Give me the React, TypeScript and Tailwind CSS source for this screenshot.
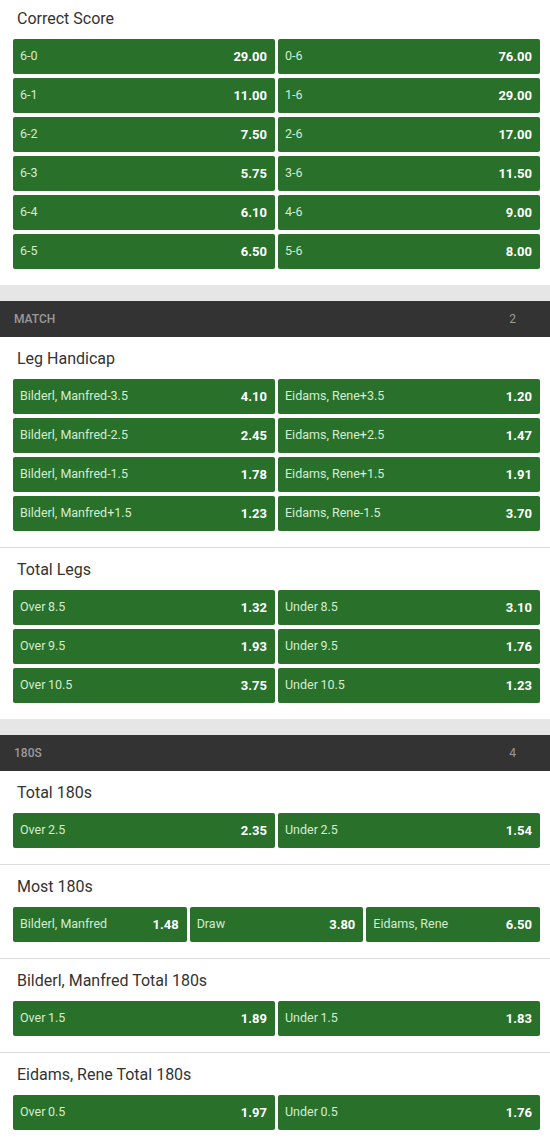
import React from "react";

type Sel = [string, string];

const Btn = ({ label, odds }: { label: string; odds: string }) => (
  <div className="flex h-[35px] items-center justify-between rounded-[2px] bg-[#29702a] pl-[7px] pr-[8px]">
    <span className="text-[12.5px] text-[#d3ecd0]">{label}</span>
    <span className="text-[13px] font-bold text-white">{odds}</span>
  </div>
);

const Market = ({
  title,
  rows,
  cols = 2,
  first = false,
  divider = true,
}: {
  title: string;
  rows: Sel[];
  cols?: number;
  first?: boolean;
  divider?: boolean;
}) => (
  <div className={divider ? "border-b border-[#dcdcdc]" : ""}>
    <div className={`${first ? "pt-[8px]" : "pt-[11px]"} pl-[17px] text-[16px] leading-[22px] text-[#333333]`}>
      {title}
    </div>
    <div
      className={`mt-[9px] grid ${cols === 3 ? "grid-cols-3" : "grid-cols-2"} gap-x-[3px] gap-y-[4px] pb-[16px] pl-[13px] pr-[10px]`}
    >
      {rows.map(([l, o], i) => (
        <Btn key={i} label={l} odds={o} />
      ))}
    </div>
  </div>
);

const Header = ({ name, count }: { name: string; count: string }) => (
  <div>
    <div className="h-[16px] bg-[#e6e6e6]" />
    <div className="flex h-[36px] items-center justify-between bg-[#333333] pl-[14px] pr-[34px] text-[12px] font-medium text-[#9a9a9a]">
      <span>{name}</span>
      <span className="font-normal">{count}</span>
    </div>
  </div>
);

export default function App() {
  return (
    <div className="w-[550px] bg-white" style={{ fontFamily: "Roboto, 'Liberation Sans', sans-serif" }}>
      <Market
        first
        divider={false}
        title="Correct Score"
        rows={[
          ["6-0", "29.00"],
          ["0-6", "76.00"],
          ["6-1", "11.00"],
          ["1-6", "29.00"],
          ["6-2", "7.50"],
          ["2-6", "17.00"],
          ["6-3", "5.75"],
          ["3-6", "11.50"],
          ["6-4", "6.10"],
          ["4-6", "9.00"],
          ["6-5", "6.50"],
          ["5-6", "8.00"],
        ]}
      />
      <Header name="MATCH" count="2" />
      <Market
        title="Leg Handicap"
        rows={[
          ["Bilderl, Manfred-3.5", "4.10"],
          ["Eidams, Rene+3.5", "1.20"],
          ["Bilderl, Manfred-2.5", "2.45"],
          ["Eidams, Rene+2.5", "1.47"],
          ["Bilderl, Manfred-1.5", "1.78"],
          ["Eidams, Rene+1.5", "1.91"],
          ["Bilderl, Manfred+1.5", "1.23"],
          ["Eidams, Rene-1.5", "3.70"],
        ]}
      />
      <Market
        divider={false}
        title="Total Legs"
        rows={[
          ["Over\u20098.5", "1.32"],
          ["Under\u20098.5", "3.10"],
          ["Over\u20099.5", "1.93"],
          ["Under\u20099.5", "1.76"],
          ["Over\u200910.5", "3.75"],
          ["Under\u200910.5", "1.23"],
        ]}
      />
      <Header name="180S" count="4" />
      <Market
        title="Total 180s"
        rows={[
          ["Over\u20092.5", "2.35"],
          ["Under\u20092.5", "1.54"],
        ]}
      />
      <Market
        title="Most 180s"
        cols={3}
        rows={[
          ["Bilderl, Manfred", "1.48"],
          ["Draw", "3.80"],
          ["Eidams, Rene", "6.50"],
        ]}
      />
      <Market
        title="Bilderl, Manfred Total 180s"
        rows={[
          ["Over\u20091.5", "1.89"],
          ["Under\u20091.5", "1.83"],
        ]}
      />
      <Market
        divider={false}
        title="Eidams, Rene Total 180s"
        rows={[
          ["Over\u20090.5", "1.97"],
          ["Under\u20090.5", "1.76"],
        ]}
      />
    </div>
  );
}
